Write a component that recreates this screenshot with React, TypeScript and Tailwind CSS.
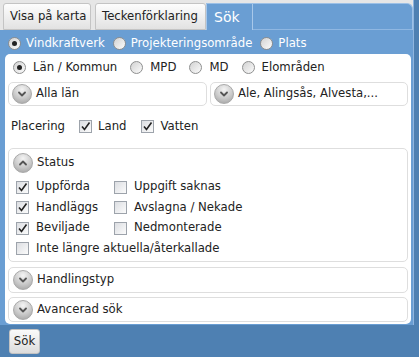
import React from "react";

const Chevron = ({ up = false }: { up?: boolean }) => (
  <svg width="8" height="6" viewBox="0 0 8 6" className={up ? "rotate-180" : ""}>
    <path d="M1 1.5 L4 4.5 L7 1.5" fill="none" stroke="#555" strokeWidth="1.8" strokeLinecap="round" strokeLinejoin="round" />
  </svg>
);

const Ball = ({ up = false }: { up?: boolean }) => (
  <div className="w-[20px] h-[20px] shrink-0 rounded-full border border-[#a9a9a9] bg-[radial-gradient(circle_at_50%_25%,#f4f4f4,#c9c9c9_55%,#9d9d9d)] flex items-center justify-center">
    <Chevron up={up} />
  </div>
);

const Radio = ({ checked = false }: { checked?: boolean }) => (
  <span className="w-[13px] h-[13px] shrink-0 rounded-full border border-[#8e8f8f] bg-[linear-gradient(135deg,#d2d2d2,#fbfbfb)] flex items-center justify-center">
    {checked && <span className="w-[5px] h-[5px] rounded-full bg-[#222]" />}
  </span>
);

const Check = ({ checked = false }: { checked?: boolean }) => (
  <span className="w-[13px] h-[13px] shrink-0 border border-[#9da3ab] bg-[linear-gradient(135deg,#dcdee2,#fbfbfb)] flex items-center justify-center">
    {checked && (
      <svg width="11" height="11" viewBox="0 0 11 11">
        <path d="M2 5.5 L4.5 8.5 L9.5 1.5" fill="none" stroke="#222" strokeWidth="1.6" />
      </svg>
    )}
  </span>
);

const CheckItem = ({ label, checked = false, w }: { label: string; checked?: boolean; w?: string }) => (
  <div className={`flex items-center gap-[7px] h-[20.5px] ${w ?? ""}`}>
    <Check checked={checked} />
    <span>{label}</span>
  </div>
);

const Box = ({ children, className = "" }: { children: React.ReactNode; className?: string }) => (
  <div className={`border border-[#dedede] rounded-[5px] bg-white ${className}`}>{children}</div>
);

export default function App() {
  return (
    <div className="w-[419px] h-[357px] bg-[#4e80b2] overflow-hidden font-['DejaVu_Sans',sans-serif] text-[11.7px] text-[#222]">
      <div className="w-[414px] bg-[#6a9ed3] pb-[1px] border-r border-[#8fb5df]">
        {/* tabs */}
        <div className="flex h-[30px] bg-[#e6e6e6] pt-[3px] pl-[3px]">
          <div className="w-[88px] h-[27px] mr-[4px] flex items-center pl-[6px] border border-[#c4c4c4] rounded-t-[3px] bg-[linear-gradient(#fdfdfd,#e2e2e2)]">
            Visa på karta
          </div>
          <div className="w-[111px] h-[27px] flex items-center pl-[6px] border border-[#c4c4c4] rounded-t-[3px] bg-[linear-gradient(#fdfdfd,#e2e2e2)]">
            Teckenförklaring
          </div>
          <div className="flex-1 flex bg-[#6a9ed3] rounded-tr-[6px] border-t border-r border-[#9cc0e6]">
            <div className="w-[47px] h-full flex items-center pl-[7px] border-l border-r border-[#a8c8ea] text-white text-[14px]">
              Sök
            </div>
            <div className="flex-1 border-b border-[#8fb7e2]" />
          </div>
        </div>

        {/* type radio row */}
        <div className="flex items-center h-[24px] pt-[3px] pl-[8px] text-white">
          <div className="flex items-center gap-[5px] mr-[8px]">
            <Radio checked />
            <span>Vindkraftverk</span>
          </div>
          <div className="flex items-center gap-[5px] mr-[8px]">
            <Radio />
            <span>Projekteringsområde</span>
          </div>
          <div className="flex items-center gap-[5px]">
            <Radio />
            <span>Plats</span>
          </div>
        </div>

        {/* white panel */}
        <div className="mx-[5px] w-[406px] bg-white rounded-[5px] px-[2px] pb-[2px]">
          <div className="flex items-center h-[28px] pb-[1px] pl-[6px]">
            <div className="flex items-center gap-[7px] mr-[13px]">
              <Radio checked />
              <span>Län / Kommun</span>
            </div>
            <div className="flex items-center gap-[7px] mr-[13px]">
              <Radio />
              <span>MPD</span>
            </div>
            <div className="flex items-center gap-[7px] mr-[13px]">
              <Radio />
              <span>MD</span>
            </div>
            <div className="flex items-center gap-[7px]">
              <Radio />
              <span>Elområden</span>
            </div>
          </div>

          <div className="flex gap-[3px] pl-[1px]">
            <Box className="w-[199px] h-[24px] flex items-center gap-[4px] pl-[3px]">
              <Ball />
              <span>Alla län</span>
            </Box>
            <Box className="w-[198px] h-[24px] flex items-center gap-[4px] pl-[3px]">
              <Ball />
              <span>Ale, Alingsås, Alvesta,...</span>
            </Box>
          </div>

          <div className="flex items-center h-[42px] pl-[4px]">
            <span className="mr-[14px]">Placering</span>
            <div className="flex items-center gap-[6px] mr-[15px]">
              <Check checked />
              <span>Land</span>
            </div>
            <div className="flex items-center gap-[6px]">
              <Check checked />
              <span>Vatten</span>
            </div>
          </div>

          <Box className="mx-[1px] pt-[4px] pb-[2px]">
            <div className="flex items-center gap-[4px] pl-[4px] h-[20px]">
              <Ball up />
              <span>Status</span>
            </div>
            <div className="pl-[7px] pt-[4px]">
              <div className="flex">
                <CheckItem label="Uppförda" checked w="w-[98px]" />
                <CheckItem label="Uppgift saknas" />
              </div>
              <div className="flex">
                <CheckItem label="Handläggs" checked w="w-[98px]" />
                <CheckItem label="Avslagna / Nekade" />
              </div>
              <div className="flex">
                <CheckItem label="Beviljade" checked w="w-[98px]" />
                <CheckItem label="Nedmonterade" />
              </div>
              <CheckItem label="Inte längre aktuella/återkallade" />
            </div>
          </Box>

          <Box className="mx-[1px] mt-[5px] h-[26px] flex items-center gap-[4px] pl-[4px]">
            <Ball />
            <span>Handlingstyp</span>
          </Box>
          <Box className="mx-[1px] mt-[4px] h-[25px] flex items-center gap-[4px] pl-[4px]">
            <Ball />
            <span>Avancerad sök</span>
          </Box>
        </div>
      </div>

      <div className="pl-[9px] pt-[4px]">
        <button className="w-[31px] h-[25px] border border-[#c2c2c2] rounded-[3px] bg-[linear-gradient(#fafafa,#dcdcdc)] text-[#222] flex items-center justify-center">
          Sök
        </button>
      </div>
    </div>
  );
}
